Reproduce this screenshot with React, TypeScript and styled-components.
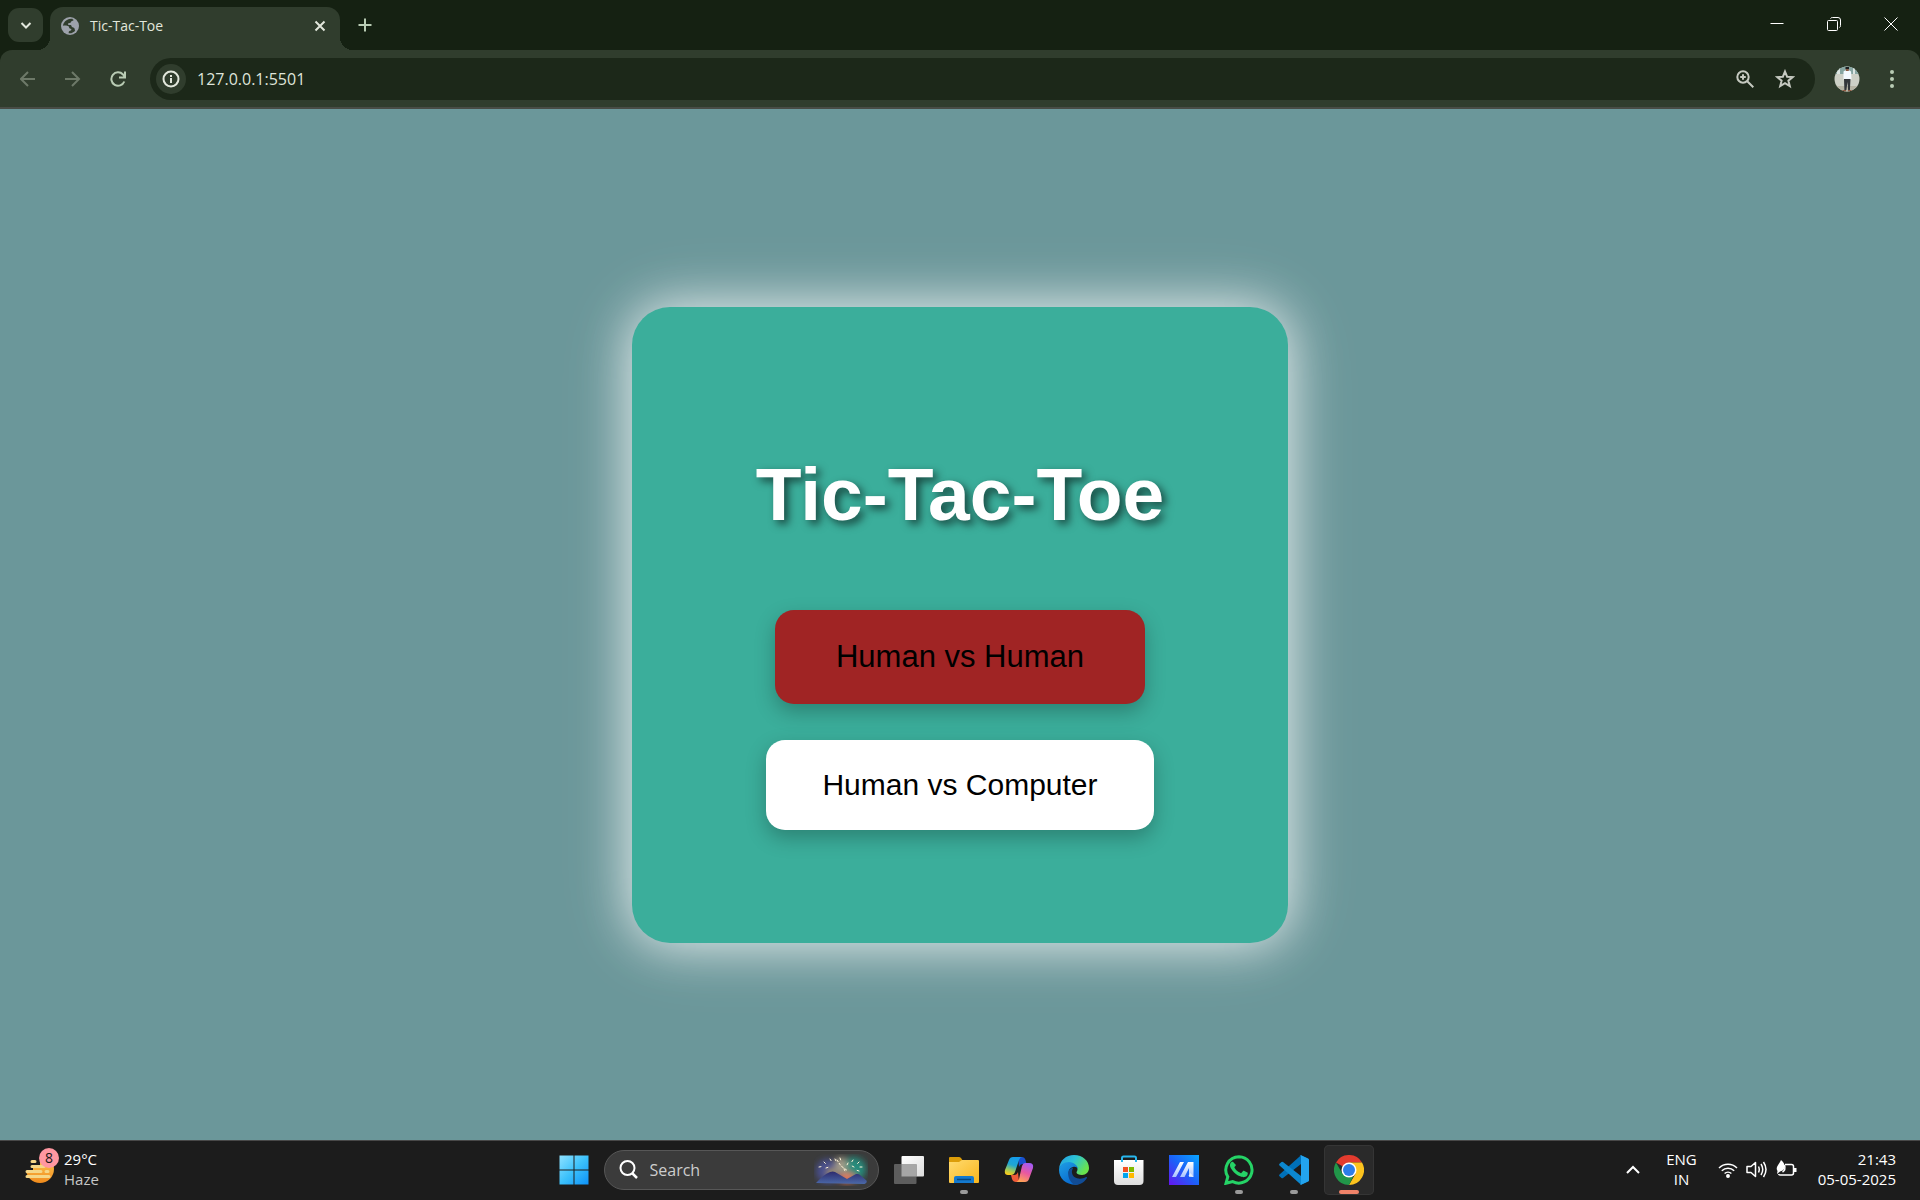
import React from "react";
import styled, { createGlobalStyle, css } from "styled-components";

const ui = `"Open Sans", "Noto Sans", sans-serif`;
const c = {
  strip: "#152112",
  toolbar: "#303d2d",
  omnibox: "#1c2819",
  icon: "#e2e7dc",
  green: "#b9ccb4",
  page: "#6b979a",
  card: "#3bae9b",
  taskbar: "#1c1c1c",
};

const GlobalStyle = createGlobalStyle`
  *, *::before, *::after { box-sizing: border-box; }
  body { margin: 0; background: ${c.page}; font-family: ${ui}; }
  button, input { font: inherit; color: inherit; border: 0; margin: 0; padding: 0; background: none; outline: none; }
  svg { display: block; flex: none; }
`;

const Screen = styled.div`
  display: flex;
  flex-direction: column;
  min-height: 100vh;
`;

/* Browser frame */
const Browser = styled.header`
  background: ${c.strip};
`;
const TabStrip = styled.div`
  display: flex;
  height: 50px;
  padding: 0 1px 0 8px;
`;
const IconButton = styled.button<{ $w?: number; $h?: number; $color?: string }>`
  display: flex;
  align-items: center;
  justify-content: center;
  flex: none;
  width: ${(p) => p.$w ?? 34}px;
  height: ${(p) => p.$h ?? 34}px;
  color: ${(p) => p.$color ?? c.icon};
`;
const TabSearch = styled(IconButton)`
  margin-top: 8px;
  border-radius: 11px;
  background: ${c.toolbar};
`;
const flare = css`
  content: "";
  position: absolute;
  bottom: 0;
  width: 13px;
  height: 13px;
`;
const Tab = styled.div`
  position: relative;
  display: flex;
  align-items: center;
  width: 290px;
  margin: 7px 8px 0 7px;
  padding: 0 3px 6px 11px;
  border-radius: 13px 13px 0 0;
  background: ${c.toolbar};
  &::before {
    ${flare}
    left: -13px;
    background: radial-gradient(circle at 0 0, transparent 13px, ${c.toolbar} 13px);
  }
  &::after {
    ${flare}
    right: -13px;
    background: radial-gradient(circle at 100% 0, transparent 13px, ${c.toolbar} 13px);
  }
`;
const TabTitle = styled.span`
  flex: 1;
  margin-left: 11px;
  font-size: 14px;
  line-height: 20px;
  color: #e2e7dc;
`;
const WindowControls = styled.div`
  display: flex;
  margin-left: auto;
`;
const Toolbar = styled.div`
  display: flex;
  align-items: center;
  height: 59px;
  padding: 0 11px 0 5px;
  border-bottom: 2px solid #484c45;
  border-radius: 12px 12px 0 0;
  background: ${c.toolbar};
`;
const Nav = styled.nav`
  display: flex;
  width: 145px;
`;
const Omnibox = styled.div`
  display: flex;
  align-items: center;
  flex: 1;
  height: 42px;
  padding: 0 10px 0 6px;
  border-radius: 21px;
  background: ${c.omnibox};
`;
const SiteInfo = styled(IconButton)`
  border-radius: 50%;
  background: ${c.toolbar};
`;
const Address = styled.input`
  flex: 1;
  min-width: 0;
  margin-left: 11px;
  font-size: 16px;
  line-height: 24px;
  color: #dfe4da;
`;
const Profile = styled(IconButton)`
  margin: 0 11px 0 15px;
`;

/* Game page */
const Page = styled.main`
  display: flex;
  flex: 1;
  align-items: center;
  justify-content: center;
  background: ${c.page};
`;
const Card = styled.section`
  display: flex;
  flex-direction: column;
  align-items: center;
  padding: 144px 124px 113px;
  border-radius: 38px;
  background: ${c.card};
  box-shadow: 0 0 50px rgba(255, 255, 255, 0.75), 0 0 75px rgba(255, 255, 255, 0.3);
  font-family: Arial, "Liberation Sans", sans-serif;
`;
const Title = styled.h1`
  margin: 0 0 73px;
  font-size: 75px;
  line-height: 86px;
  color: #fff;
  text-shadow: 4px 4px 8px rgba(0, 0, 0, 0.6);
`;
const Modes = styled.div`
  display: flex;
  flex-direction: column;
  align-items: center;
  gap: 36px;
`;
const ModeButton = styled.button<{ $active?: boolean }>`
  padding: ${(p) => (p.$active ? "29px 61px" : "27px 56px")};
  border-radius: 19px;
  background: ${(p) => (p.$active ? "#a02424" : "#fff")};
  box-shadow: 0 8px 20px rgba(0, 0, 0, 0.25);
  font-size: ${(p) => (p.$active ? 31 : 30)}px;
  line-height: 36px;
  color: #000;
`;

/* Taskbar */
const Taskbar = styled.footer`
  display: grid;
  grid-template-columns: 1fr auto 1fr;
  align-items: center;
  height: 60px;
  padding-bottom: 2px;
  border-top: 1px solid #484848;
  background: ${c.taskbar};
  color: #fff;
  font-size: 15px;
  line-height: 20px;
`;
const Weather = styled.button`
  display: flex;
  align-items: center;
  gap: 5px;
  justify-self: start;
  padding-left: 24px;
  text-align: left;
`;
const Lines = styled.span<{ $align?: string }>`
  display: flex;
  flex-direction: column;
  padding-bottom: 2px;
  text-align: ${(p) => p.$align ?? "left"};
`;
const Muted = styled.span`
  color: #c6c6c6;
`;
const Apps = styled.div`
  display: flex;
  align-items: center;
  gap: 5px;
  padding-left: 2px;
`;
const AppButton = styled.button<{ $open?: boolean; $active?: boolean }>`
  position: relative;
  display: flex;
  align-items: center;
  justify-content: center;
  width: 50px;
  height: 50px;
  border-radius: 5px;
  ${(p) => p.$active && css`
    background: #2a2a2a;
    box-shadow: inset 0 0 0 1px #353535;
  `}
  ${(p) => (p.$open || p.$active) && css`
    &::after {
      content: "";
      position: absolute;
      bottom: 1px;
      width: ${p.$active ? 20 : 8}px;
      height: 4px;
      border-radius: 2px;
      background: ${p.$active ? "#f08369" : "#9a9a9a"};
    }
  `}
`;
const SearchBox = styled.label`
  display: flex;
  align-items: center;
  width: 275px;
  height: 40px;
  padding: 0 10px 0 14px;
  border: 1px solid #575757;
  border-radius: 20px;
  background: #3b3b3b;
`;
const SearchInput = styled.input`
  flex: 1;
  min-width: 0;
  margin-left: 12px;
  font-size: 16px;
  &::placeholder { color: #cdcdcd; opacity: 1; }
`;
const Tray = styled.div`
  display: flex;
  align-items: center;
  justify-self: end;
  padding-right: 24px;
`;
const TrayButton = styled.button<{ $gap?: number }>`
  display: flex;
  align-items: center;
  gap: 8px;
  margin-right: ${(p) => p.$gap ?? 0}px;
`;

type StrokeProps = { size: number; box?: number; w?: number; children: React.ReactNode };
const Stroke = ({ size, box, w = 2, children }: StrokeProps) => (
  <svg width={size} height={size} viewBox={`0 0 ${box ?? size} ${box ?? size}`} fill="none" stroke="currentColor" strokeWidth={w} aria-hidden="true">
    {children}
  </svg>
);

const Globe = () => (
  <svg width="18" height="18" viewBox="0 0 18 18" aria-hidden="true">
    <circle cx="9" cy="9" r="9" fill="#9da2ab" />
    <path d="M11.500 1.800C8 1.300 4.500 3 2.700 6.200c-.4.800-.7 1.600-.8 2.500 2.200-.3 4.600-.2 5.600.6.900.8.300 1.700 1.300 2.100 1 .3 2 .6 1.500 1.600-.5.800-1.900.4-2.400 1.500-.3.800-.3 1.300-.1 1.800 2.500.3 4.900-.7 6.400-2.500-.6-.9-.2-1.700-.8-2.600-.7-1-1.700-.8-2.400-1.300-.8-.5-.4-1.500-1.300-1.800-.9-.2-2.700.2-2.800-1 0-1 1.200-1 2.200-1 .7 0 .7-1.300 1.400-1.800.7-.6 1.900-.2 2.100-1.200.2-.700-1.400-.5-1.100-1.300Z" fill={c.toolbar} />
  </svg>
);

const Avatar = () => (
  <svg width="26" height="26" viewBox="0 0 26 26" aria-hidden="true">
    <defs><clipPath id="av"><circle cx="13" cy="13" r="12.500" /></clipPath></defs>
    <g clipPath="url(#av)">
      <path fill="#cdd0c6" d="M0 0h26v26H0z" />
      <path fill="#87a6a2" d="M0 0h26v8H0z" />
      <path fill="#dce5e2" d="M3 2h3v6H3zM19 1h2v7h-2z" />
      <path fill="#b6b4a4" d="M0 20h26v6H0z" />
      <path fill="#f3faff" d="M9.500 5.500 12 4h2.500l2.500 1.500.500 8h-8z" />
      <path fill="#33363a" d="M10 13h6.500l-.600 11h-1.800L13.500 16 12.400 24h-2z" />
      <path fill="#8b5a43" d="M11.800 2h3v3h-3zM8 24h4v2H8zM14 24h4v2h-4z" />
      <path fill="#1d2021" d="M11.500 1h3.500v2h-3.500z" />
    </g>
  </svg>
);

const Haze = () => (
  <svg width="35" height="44" viewBox="0 0 35 44" aria-hidden="true">
    <defs><linearGradient id="sun" x2="0" y2="1"><stop stopColor="#ffd15a" /><stop offset="1" stopColor="#f08a1c" /></linearGradient></defs>
    <circle cx="16" cy="21" r="14" fill="url(#sun)" />
    <path d="M0 4h16v16H9v4H0z" fill={c.taskbar} />
    <path d="M8 13.500h3M8 18.500h12M3 23.500h14M22 23.500h2M3 28.500h22" stroke="#f5d787" strokeWidth="3" strokeLinecap="round" />
    <circle cx="25" cy="10" r="10" fill="#ff97a1" />
    <text x="25" y="15" textAnchor="middle" fontSize="14" fill="#161616">8</text>
  </svg>
);

const Windows = () => (
  <svg width="30" height="30" viewBox="0 0 30 30" aria-hidden="true">
    <defs><linearGradient id="wn" x2="1" y2="1"><stop stopColor="#8fe2ff" /><stop offset=".5" stopColor="#3cc1fb" /><stop offset="1" stopColor="#0d91f8" /></linearGradient></defs>
    <path fill="url(#wn)" d="M.5.500h14v14H.5zM15.500.500h14v14h-14zM.5 15.500h14v14H.5zM15.500 15.500h14v14h-14z" />
  </svg>
);

const Fireworks = () => (
  <svg width="54" height="32" viewBox="0 0 54 32" aria-hidden="true">
    <defs>
      <filter id="soft" x="-30%" y="-30%" width="160%" height="160%"><feGaussianBlur stdDeviation="3" /></filter>
      <linearGradient id="mt" x2="0" y2="1"><stop stopColor="#2d2b6e" /><stop offset="1" stopColor="#4b69a8" /></linearGradient>
    </defs>
    <g filter="url(#soft)">
      <ellipse cx="14" cy="17" rx="12" ry="12" fill="#48508d" />
      <ellipse cx="39" cy="15" rx="13" ry="12" fill="#258b7c" />
      <ellipse cx="27" cy="11" rx="6" ry="8" fill="#a49d89" />
      <ellipse cx="33" cy="24" rx="8" ry="5" fill="#e9785c" />
      <ellipse cx="18" cy="19" rx="5" ry="4" fill="#ae9b5c" />
    </g>
    <path d="M2 29q7-8 14-11 3-1 5 0L33 25l9-5q3-.5 4 1l6.500 5.500q1 2-2 3.500Z" fill="url(#mt)" />
    <path d="m23 6 4 6 7 5M16 5l2 3M10 8l2 2M5 13l3-.500M12 14l3-1M21 5l1 2M39 6l-2 3M45 8l-2 2M48 13h-3M40 13l-2-1M45 17l-3-1M30 15l1 2M34 9l-1 2M26 4l1 3" stroke="#fff4d8" strokeLinecap="round" strokeDasharray="2 2" fill="none" />
  </svg>
);

const TaskView = () => (
  <svg width="30" height="30" viewBox="0 0 30 30" aria-hidden="true">
    <defs><linearGradient id="tv" x2="1" y2="1"><stop stopColor="#fff" /><stop offset="1" stopColor="#dcdcdc" /></linearGradient></defs>
    <rect x="7.500" y="1" width="22.500" height="20.500" rx="1" fill="url(#tv)" />
    <rect x="0" y="9" width="22.500" height="20" rx="1" fill="#5d5d5d" />
    <path d="M7.500 9h15v12.500h-15z" fill="#a6a6a6" />
  </svg>
);

const Folder = () => (
  <svg width="30" height="30" viewBox="0 0 30 30" aria-hidden="true">
    <defs><linearGradient id="fo" x2="1" y2="1"><stop stopColor="#ffdb70" /><stop offset="1" stopColor="#f9b51c" /></linearGradient></defs>
    <path d="M0 3q0-1 1-1h9q1 0 2 1l2 3v6H0z" fill="#dc9d09" />
    <path d="M0 7h10l3-2h16q1 0 1 1v21q0 1-1 1H1q-1 0-1-1z" fill="url(#fo)" />
    <path d="M5 28v-5q0-2 2-2h16q2 0 2 2v5z" fill="#1479ce" />
    <path d="M8 24.500h14" stroke="#07477f" strokeWidth="1.500" />
  </svg>
);

const Copilot = () => (
  <svg width="30" height="30" viewBox="0 0 30 30" aria-hidden="true">
    <defs>
      <linearGradient id="ca" x1=".6" x2=".3" y2="1"><stop stopColor="#159cec" /><stop offset=".45" stopColor="#20a7d3" /><stop offset=".75" stopColor="#9cc95c" /><stop offset="1" stopColor="#fbcb19" /></linearGradient>
      <linearGradient id="cb" x1=".7" x2=".3" y2="1"><stop stopColor="#a35bf5" /><stop offset=".5" stopColor="#e958a0" /><stop offset="1" stopColor="#ffa553" /></linearGradient>
    </defs>
    <path d="M14 2h4q2.500 0 3.500 3l1 4H19q-3 0-4 3z" fill="#1950cf" />
    <path d="M15 27h-3q-3 0-4-3l-1-4h3q3 0 4-3z" fill="#ee5b39" />
    <path d="M9 2h9q-2 0-3 3l-4 12q-1 3-4 3H4q-4 0-3-5L5 5q1-3 4-3Z" fill="url(#ca)" />
    <path d="M21 8h4q5 0 4 5l-4 11q-1 3-4 3h-9q2 0 3-3l3-13q1-3 3-3Z" fill="url(#cb)" />
  </svg>
);

const Edge = () => (
  <svg width="30" height="30" viewBox="0 0 30 30" aria-hidden="true">
    <defs>
      <linearGradient id="ea" x1="0" x2="1" y2=".5"><stop stopColor="#239ae5" /><stop offset=".5" stopColor="#2cc3d5" /><stop offset="1" stopColor="#69e34d" /></linearGradient>
      <linearGradient id="eb" x2=".6" y2="1"><stop stopColor="#1f9fe4" /><stop offset="1" stopColor="#0869cf" /></linearGradient>
    </defs>
    <path d="M0 14C1 5 7 0 15 0c9 0 15 6 15 13 0 4-3 7-7 7-3 0-5.500-1-5.500-2.500 0-1 1-1.500 1-3.500 0-3-4-6-9-6-4 0-8 2-9.500 6Z" fill="url(#ea)" />
    <path d="M0 15C0 10 5 7 10 7c5 0 9 4 9 7-1-2-3-2.500-5-2-4 1-5 4-4 8 1 6 5 9 10 9.500C8 31 0 24 0 15Z" fill="url(#eb)" />
    <path d="M11 14c-3 3-2 10 2 14 2 2 5 2 8 1 3-1 5-3 7-6 0-1 0-1-1-1-5 3-13 2-14-4-.300-2 .3-3.500 1-5-1 0-2 0-3 1Z" fill="#114c95" />
  </svg>
);

const Store = () => (
  <svg width="30" height="30" viewBox="0 0 30 30" aria-hidden="true">
    <defs><linearGradient id="st" x2="0" y2="1"><stop stopColor="#fff" /><stop offset="1" stopColor="#dedede" /></linearGradient></defs>
    <path d="M0 5h29.500v21q0 4-4 4H4q-4 0-4-4z" fill="url(#st)" />
    <path d="M8 7V3q0-1.500 1.500-1.500h11Q22 1.500 22 3v4" fill="none" stroke="#28b7ee" strokeWidth="2" />
    <path d="M9 12h5v5H9z" fill="#f25022" /><path d="M15 12h5v5h-5z" fill="#7fba00" />
    <path d="M9 18h5v5H9z" fill="#00a4ef" /><path d="M15 18h5v5h-5z" fill="#ffb900" />
  </svg>
);

const MyAsus = () => (
  <svg width="30" height="30" viewBox="0 0 30 30" aria-hidden="true">
    <defs>
      <linearGradient id="ma" x1="0" y1="1" x2="1" y2="0"><stop stopColor="#6614ef" /><stop offset=".5" stopColor="#1b62f8" /><stop offset="1" stopColor="#09a5ff" /></linearGradient>
      <linearGradient id="mb" x2="0" y2="1"><stop stopColor="#fff" /><stop offset="1" stopColor="#a8c4ff" /></linearGradient>
    </defs>
    <path fill="url(#ma)" d="M0 0h30v30H0z" />
    <path fill="url(#mb)" d="M3 22 11 7h4L7 22zM11 22l8-15h5.500v15H20v-9l-4.500 9z" />
    <path d="m24.500 22-5-1 2-3z" fill="#e8f1ff" />
  </svg>
);

const WhatsApp = () => (
  <svg width="30" height="30" viewBox="0 0 30 30" aria-hidden="true">
    <path d="M15 1.700a13.200 13.200 0 1 1-6.300 24.900L2 28.300l1.800-6.500A13.200 13.200 0 0 1 15 1.700Z" fill="none" stroke="#25d366" strokeWidth="3" />
    <path d="M10.600 7.800c-.4-.8-.8-.8-1.200-.8-1.200 0-2.600 1.400-2.600 3.700 0 2.200 1.600 4.300 1.900 4.600.2.300 3.200 5 7.900 6.800 3.900 1.500 4.700 1.200 5.500 1.100.9-.1 2.800-1.100 3.100-2.200.4-1.100.4-2 .3-2.200-.1-.2-.4-.3-.9-.600l-3.100-1.500c-.4-.1-.7-.200-1.100.300l-1.400 1.800c-.3.300-.500.400-1 .1-.5-.2-2-.7-3.800-2.300-1.400-1.300-2.300-2.800-2.600-3.300-.3-.4 0-.7.200-.9l1.100-1.300c.2-.4.1-.6 0-.9Z" transform="translate(-.500 0) scale(.95)" fill="#25d366" />
  </svg>
);

const VsCode = () => (
  <svg width="30" height="30" viewBox="0 0 30 30" aria-hidden="true">
    <path d="M22 .2 29 3.500q1 .5 1 1.500L22 9 4 23q-.8.500-1.500 0l-2-1.800q-.8-.8 0-1.600Z" fill="#0070b8" />
    <path d="M22 29.800 29 26.500q1-.5 1-1.500l-8-4L4 7q-.8-.5-1.500 0L.5 8.800q-.8.800 0 1.600Z" fill="#0c88d0" />
    <path d="M22 29.800q-1 .3-1.500-.3 1.500 1 1.500-1.500V2q0-2.500-1.500-1.500.500-.6 1.500-.3L29 3.500q1 .5 1 1.500v20q0 1-1 1.500Z" fill="#23a4ef" />
  </svg>
);

const Chrome = () => (
  <svg width="30" height="30" viewBox="0 0 30 30" aria-hidden="true">
    <path d="M15 15 2 7.500A15 15 0 0 1 28 7.500H15Z" fill="#e33b2e" />
    <path d="M15 7.500h13A15 15 0 0 1 15 30l6.500-11.200Z" fill="#fcc31e" />
    <path d="M15 30A15 15 0 0 1 2 7.500l6.500 11.200 6.500 3.800 4.300-1.200Z" fill="#219649" />
    <circle cx="15" cy="15" r="7.500" fill="#fff" />
    <circle cx="15" cy="15" r="6" fill="#2c7de9" />
  </svg>
);

const apps: { name: string; icon: React.ReactNode; open?: boolean; active?: boolean }[] = [
  { name: "Task View", icon: <TaskView /> },
  { name: "File Explorer", icon: <Folder />, open: true },
  { name: "Copilot", icon: <Copilot /> },
  { name: "Microsoft Edge", icon: <Edge /> },
  { name: "Microsoft Store", icon: <Store /> },
  { name: "MyASUS", icon: <MyAsus /> },
  { name: "WhatsApp", icon: <WhatsApp />, open: true },
  { name: "Visual Studio Code", icon: <VsCode />, open: true },
  { name: "Google Chrome", icon: <Chrome />, active: true },
];

export default function App() {
  return (
    <>
      <GlobalStyle />
      <Screen>
        <Browser>
          <TabStrip>
            <TabSearch $w={35} aria-label="Search tabs">
              <Stroke size={12}><path d="m1.500 4 4.500 4.500L10.500 4" /></Stroke>
            </TabSearch>
            <Tab>
              <Globe />
              <TabTitle>Tic-Tac-Toe</TabTitle>
              <IconButton aria-label="Close tab">
                <Stroke size={12}><path d="m1.500 1.500 9 9m0-9-9 9" /></Stroke>
              </IconButton>
            </Tab>
            <IconButton $h={50} $color={c.green} aria-label="New tab">
              <Stroke size={14}><path d="M7 .500v13M.5 7h13" /></Stroke>
            </IconButton>
            <WindowControls>
              <IconButton $w={57} $h={48} $color="#fff" aria-label="Minimize">
                <Stroke size={14} w={1}><path d="M.5 6.500h13" /></Stroke>
              </IconButton>
              <IconButton $w={57} $h={48} $color="#fff" aria-label="Restore">
                <Stroke size={14} w={1}><rect x=".5" y="3.500" width="10" height="10" rx="1" /><path d="M3.500 1.500q.500-1 2-1h5.500q2.500 0 2.500 2.500v5.500q0 1.500-1 2" /></Stroke>
              </IconButton>
              <IconButton $w={57} $h={48} $color="#fff" aria-label="Close">
                <Stroke size={14} w={1}><path d="m.5.500 13 13m0-13-13 13" /></Stroke>
              </IconButton>
            </WindowControls>
          </TabStrip>
          <Toolbar>
            <Nav>
              <IconButton $w={45} $color="#6d7968" aria-label="Back">
                <Stroke size={16}><path d="M15 8H1.500M8 1 1 8l7 7" /></Stroke>
              </IconButton>
              <IconButton $w={45} $color="#6d7968" aria-label="Forward">
                <Stroke size={16}><path d="M0 8h14M7 1l7 7-7 7" /></Stroke>
              </IconButton>
              <IconButton $w={45} $color={c.green} aria-label="Reload">
                <Stroke size={16}><path d="M14.300 10.500A6.700 6.700 0 1 1 13 3.500L14.800 6M15 .500V6.500H9" /></Stroke>
              </IconButton>
            </Nav>
            <Omnibox>
              <SiteInfo $w={30} $h={30} aria-label="View site information">
                <Stroke size={18}><circle cx="9" cy="9" r="7.500" /><path d="M9 8v5M9 5v2" /></Stroke>
              </SiteInfo>
              <Address aria-label="Address" defaultValue="127.0.0.1:5501" />
              <IconButton $w={40} $color="#c5c9c0" aria-label="Zoom">
                <Stroke size={18}><circle cx="7" cy="7" r="5.700" /><path d="m11 11 6.300 6.300M7 4.200v5.600M4.200 7h5.600" /></Stroke>
              </IconButton>
              <IconButton $w={40} $color="#c5c9c0" aria-label="Bookmark this tab">
                <Stroke size={20}><path d="m10 2.500 2.100 5.200 5.600.4-4.300 3.600 1.400 5.500-4.800-3-4.800 3 1.400-5.500L2.300 8.100l5.600-.4Z" /></Stroke>
              </IconButton>
            </Omnibox>
            <Profile aria-label="Profile"><Avatar /></Profile>
            <IconButton $color={c.green} aria-label="Menu">
              <svg width="18" height="18" viewBox="0 0 18 18" fill="currentColor" aria-hidden="true">
                <circle cx="9" cy="2" r="2" /><circle cx="9" cy="9" r="2" /><circle cx="9" cy="16" r="2" />
              </svg>
            </IconButton>
          </Toolbar>
        </Browser>

        <Page>
          <Card>
            <Title>Tic-Tac-Toe</Title>
            <Modes>
              <ModeButton $active>Human vs Human</ModeButton>
              <ModeButton>Human vs Computer</ModeButton>
            </Modes>
          </Card>
        </Page>

        <Taskbar>
          <Weather>
            <Haze />
            <Lines><span>29°C</span><Muted>Haze</Muted></Lines>
          </Weather>
          <Apps>
            <AppButton aria-label="Start"><Windows /></AppButton>
            <SearchBox>
              <Stroke size={19}><circle cx="8.500" cy="8" r="7" /><path d="m13 13 5 5" strokeWidth="2.500" /></Stroke>
              <SearchInput placeholder="Search" aria-label="Search" />
              <Fireworks />
            </SearchBox>
            {apps.map((a) => (
              <AppButton key={a.name} aria-label={a.name} $open={a.open} $active={a.active}>{a.icon}</AppButton>
            ))}
          </Apps>
          <Tray>
            <TrayButton $gap={26} aria-label="Show hidden icons">
              <Stroke size={14}><path d="m1 10 6-6 6 6" /></Stroke>
            </TrayButton>
            <TrayButton $gap={21}><Lines $align="center"><span>ENG</span><span>IN</span></Lines></TrayButton>
            <TrayButton $gap={21} aria-label="Network, volume and battery">
              <Stroke size={20} w={1.5}>
                <path d="M1 8a12.800 12.800 0 0 1 18 0M3.800 10.800a8.800 8.800 0 0 1 12.400 0M6.600 13.500a4.900 4.900 0 0 1 6.800 0" />
                <circle cx="10" cy="16" r="1.200" fill="currentColor" />
              </Stroke>
              <Stroke size={21} w={1.5}>
                <path d="M1 7.500h4L9.500 3.500v14L5 13.500H1z" strokeLinejoin="round" /><path d="M12.500 7.500q1.500 3 0 6M15 5q3.500 5.500 0 11M17.500 3q5 7.500 0 15" />
              </Stroke>
              <Stroke size={22} w={1.5}>
                <path d="M10 5.500h6.500q2 0 2 2v6.500q0 2-2 2h-11q-1.500 0-2-1" />
                <path d="M19 9v4M20.500 9v4" strokeWidth="2" />
                <path d="M6 1c5 4 5 10-1 11.500L2 15l.5-3C0 8 4 6 6 1Z" fill="currentColor" stroke="none" />
                <path d="M9.500 6q1.500 5-2 7" />
              </Stroke>
            </TrayButton>
            <TrayButton><Lines $align="right"><span>21:43</span><span>05-05-2025</span></Lines></TrayButton>
          </Tray>
        </Taskbar>
      </Screen>
    </>
  );
}
